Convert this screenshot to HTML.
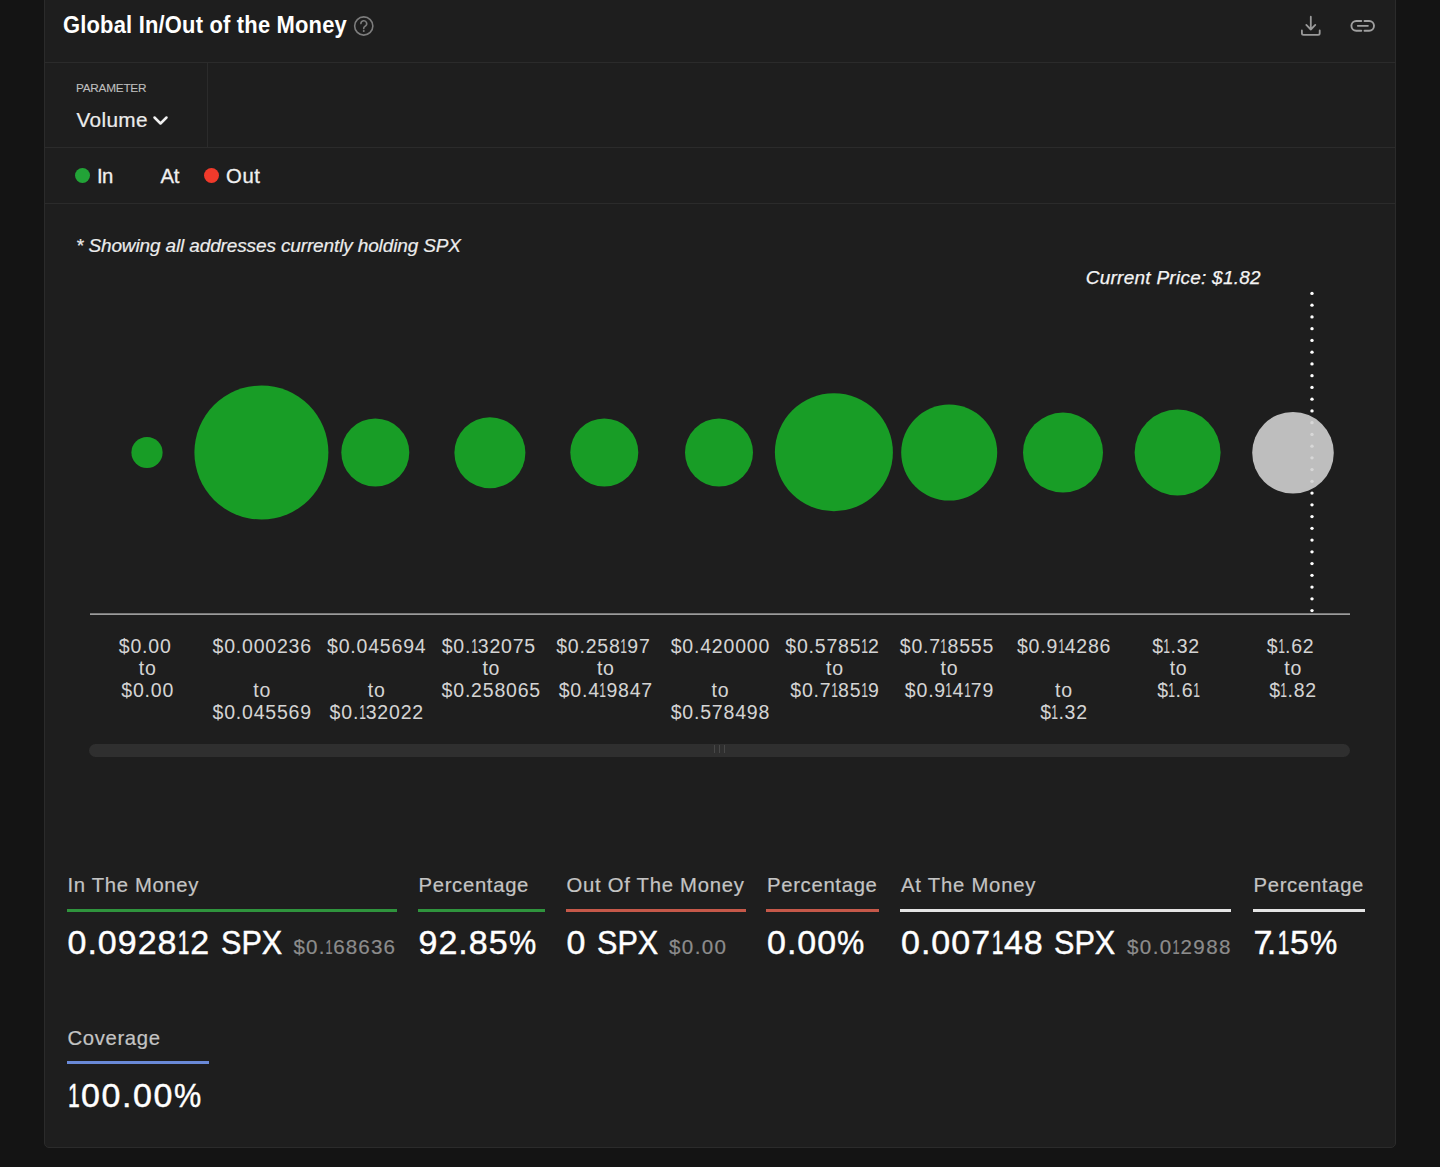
<!DOCTYPE html>
<html><head><meta charset="utf-8"><title>Global In/Out of the Money</title>
<style>
html,body{margin:0;padding:0;}
body{width:1440px;height:1167px;background:#141414;position:relative;overflow:hidden;font-family:"Liberation Sans",sans-serif;}
.t{position:absolute;white-space:pre;}
.r{position:absolute;}
.o{display:inline-block;transform:scaleX(.62);}
.sx{display:inline-block;transform:scaleX(.9);transform-origin:0 0;letter-spacing:0;}
</style></head><body>
<div class="r" style="left:44px;top:-10px;width:1352px;height:1158px;background:#1e1e1e;border:1px solid #2b2b2b;box-sizing:border-box;border-radius:5px;"></div>
<div class="t" style="left:62.50px;top:14.32px;font-size:23.6px;line-height:23.6px;color:#ffffff;font-weight:bold;letter-spacing:0.200px;transform:scaleX(0.93);transform-origin:0 0;">Global In/Out of the Money</div>
<svg class="r" style="left:352px;top:14px" width="24" height="24" viewBox="0 0 24 24"><circle cx="11.75" cy="12" r="9.1" fill="none" stroke="#7d7d7d" stroke-width="1.6"/><path d="M8.9 9.6a2.9 2.9 0 1 1 4.2 2.6c-0.8 0.45-1.35 0.95-1.35 1.9v0.5" fill="none" stroke="#7d7d7d" stroke-width="1.6" stroke-linecap="round"/><circle cx="11.75" cy="16.9" r="1" fill="#7d7d7d"/></svg>
<svg class="r" style="left:1298px;top:12px" width="26" height="26" viewBox="0 0 26 26"><path d="M12.8 4.7v12.8M8.3 12.9l4.5 4.6 4.5-4.6" fill="none" stroke="#9a9a9a" stroke-width="1.8" stroke-linecap="round" stroke-linejoin="round"/><path d="M3.9 18.5v2.8a1.6 1.6 0 0 0 1.6 1.6h14.6a1.6 1.6 0 0 0 1.6-1.6v-2.8" fill="none" stroke="#9a9a9a" stroke-width="1.8" stroke-linecap="round"/></svg>
<svg class="r" style="left:1348px;top:14px" width="30" height="24" viewBox="0 0 30 24"><path d="M13.3 7H8.25a4.85 4.85 0 0 0 0 9.7H13.3M16.5 7h4.65a4.85 4.85 0 0 1 0 9.7H16.5M9.8 11.85h10.1" fill="none" stroke="#a0a0a0" stroke-width="1.9" stroke-linecap="round"/></svg>
<div class="r" style="left:45px;top:62px;width:1350px;height:1px;background:#2b2b2b;"></div>
<div class="r" style="left:207px;top:62px;width:1px;height:85px;background:#2b2b2b;"></div>
<div class="r" style="left:45px;top:147px;width:1350px;height:1px;background:#2b2b2b;"></div>
<div class="r" style="left:45px;top:203px;width:1350px;height:1px;background:#2b2b2b;"></div>
<div class="t" style="left:76.00px;top:83.01px;font-size:11.8px;line-height:11.8px;color:#bfbfbf;letter-spacing:-0.258px;-webkit-text-stroke:0.1px currentColor;">PARAMETER</div>
<div class="t" style="left:76.50px;top:110.29px;font-size:20.8px;line-height:20.8px;color:#ececec;letter-spacing:0.324px;-webkit-text-stroke:0.2px currentColor;">Volume</div>
<svg class="r" style="left:150px;top:110px" width="20" height="20" viewBox="0 0 20 20"><path d="M4.5 7.5l6 6 6-6" fill="none" stroke="#f0f0f0" stroke-width="2.5" stroke-linecap="round" stroke-linejoin="round"/></svg>
<div class="r" style="left:74.7px;top:167.9px;width:15px;height:15px;border-radius:50%;background:#22a337"></div>
<div class="t" style="left:97.00px;top:165.82px;font-size:20.3px;line-height:20.3px;color:#f0f0f0;letter-spacing:-0.600px;-webkit-text-stroke:0.3px currentColor;">In</div>
<div class="t" style="left:160.50px;top:165.82px;font-size:20.3px;line-height:20.3px;color:#f0f0f0;letter-spacing:-0.180px;-webkit-text-stroke:0.3px currentColor;">At</div>
<div class="r" style="left:203.8px;top:167.9px;width:15px;height:15px;border-radius:50%;background:#f03a2b"></div>
<div class="t" style="left:226.00px;top:165.82px;font-size:20.3px;line-height:20.3px;color:#f0f0f0;letter-spacing:0.640px;-webkit-text-stroke:0.3px currentColor;">Out</div>
<div class="t" style="left:76.00px;top:236.12px;font-size:19px;line-height:19px;color:#ececec;font-style:italic;letter-spacing:-0.131px;-webkit-text-stroke:0.2px currentColor;">* Showing all addresses currently holding SPX</div>
<div class="t" style="left:1085.70px;top:267.92px;font-size:19px;line-height:19px;color:#f4f4f4;font-style:italic;letter-spacing:0.262px;-webkit-text-stroke:0.25px currentColor;">Current Price: $1.82</div>
<svg class="r" style="left:0;top:0" width="1440" height="1167" viewBox="0 0 1440 1167">
<circle cx="1312" cy="293.40" r="1.7" fill="#ffffff"/>
<circle cx="1312" cy="305.15" r="1.7" fill="#ffffff"/>
<circle cx="1312" cy="316.90" r="1.7" fill="#ffffff"/>
<circle cx="1312" cy="328.64" r="1.7" fill="#ffffff"/>
<circle cx="1312" cy="340.39" r="1.7" fill="#ffffff"/>
<circle cx="1312" cy="352.14" r="1.7" fill="#ffffff"/>
<circle cx="1312" cy="363.89" r="1.7" fill="#ffffff"/>
<circle cx="1312" cy="375.64" r="1.7" fill="#ffffff"/>
<circle cx="1312" cy="387.39" r="1.7" fill="#ffffff"/>
<circle cx="1312" cy="399.13" r="1.7" fill="#ffffff"/>
<circle cx="1312" cy="410.88" r="1.7" fill="#ffffff"/>
<circle cx="1312" cy="422.63" r="1.7" fill="#ffffff"/>
<circle cx="1312" cy="434.38" r="1.7" fill="#ffffff"/>
<circle cx="1312" cy="446.13" r="1.7" fill="#ffffff"/>
<circle cx="1312" cy="457.87" r="1.7" fill="#ffffff"/>
<circle cx="1312" cy="469.62" r="1.7" fill="#ffffff"/>
<circle cx="1312" cy="481.37" r="1.7" fill="#ffffff"/>
<circle cx="1312" cy="493.12" r="1.7" fill="#ffffff"/>
<circle cx="1312" cy="504.87" r="1.7" fill="#ffffff"/>
<circle cx="1312" cy="516.61" r="1.7" fill="#ffffff"/>
<circle cx="1312" cy="528.36" r="1.7" fill="#ffffff"/>
<circle cx="1312" cy="540.11" r="1.7" fill="#ffffff"/>
<circle cx="1312" cy="551.86" r="1.7" fill="#ffffff"/>
<circle cx="1312" cy="563.61" r="1.7" fill="#ffffff"/>
<circle cx="1312" cy="575.36" r="1.7" fill="#ffffff"/>
<circle cx="1312" cy="587.10" r="1.7" fill="#ffffff"/>
<circle cx="1312" cy="598.85" r="1.7" fill="#ffffff"/>
<circle cx="1312" cy="610.60" r="1.7" fill="#ffffff"/>
<circle cx="147" cy="452.5" r="15.6" fill="#189d26"/>
<circle cx="261.4" cy="452.5" r="67" fill="#189d26"/>
<circle cx="375.3" cy="452.5" r="34" fill="#189d26"/>
<circle cx="489.9" cy="452.8" r="35.5" fill="#189d26"/>
<circle cx="604.3" cy="452.5" r="34" fill="#189d26"/>
<circle cx="719" cy="452.5" r="34" fill="#189d26"/>
<circle cx="833.9" cy="452.3" r="59" fill="#189d26"/>
<circle cx="949.2" cy="452.6" r="48" fill="#189d26"/>
<circle cx="1063" cy="452.6" r="40" fill="#189d26"/>
<circle cx="1177.6" cy="452.6" r="43" fill="#189d26"/>
<circle cx="1293" cy="452.8" r="40.8" fill="#d2d2d2" fill-opacity="0.89"/>
<rect x="90" y="613.5" width="1260" height="1.2" fill="#d2d2d2"/>
</svg>
<div class="t" style="left:118.77px;top:636.79px;font-size:19.5px;line-height:19.5px;color:#d4d4d4;letter-spacing:0.800px;-webkit-text-stroke:0.05px currentColor;">$0.00</div>
<div class="t" style="left:138.74px;top:658.74px;font-size:19.5px;line-height:19.5px;color:#d4d4d4;letter-spacing:0.800px;-webkit-text-stroke:0.05px currentColor;">to</div>
<div class="t" style="left:121.27px;top:680.69px;font-size:19.5px;line-height:19.5px;color:#d4d4d4;letter-spacing:0.800px;-webkit-text-stroke:0.05px currentColor;">$0.00</div>
<div class="t" style="left:212.53px;top:636.79px;font-size:19.5px;line-height:19.5px;color:#d4d4d4;letter-spacing:0.800px;-webkit-text-stroke:0.05px currentColor;">$0.000236</div>
<div class="t" style="left:253.29px;top:680.69px;font-size:19.5px;line-height:19.5px;color:#d4d4d4;letter-spacing:0.800px;-webkit-text-stroke:0.05px currentColor;">to</div>
<div class="t" style="left:212.53px;top:702.64px;font-size:19.5px;line-height:19.5px;color:#d4d4d4;letter-spacing:0.800px;-webkit-text-stroke:0.05px currentColor;">$0.045569</div>
<div class="t" style="left:327.07px;top:636.79px;font-size:19.5px;line-height:19.5px;color:#d4d4d4;letter-spacing:0.800px;-webkit-text-stroke:0.05px currentColor;">$0.045694</div>
<div class="t" style="left:367.83px;top:680.69px;font-size:19.5px;line-height:19.5px;color:#d4d4d4;letter-spacing:0.800px;-webkit-text-stroke:0.05px currentColor;">to</div>
<div class="t" style="left:329.61px;top:702.64px;font-size:19.5px;line-height:19.5px;color:#d4d4d4;letter-spacing:0.800px;-webkit-text-stroke:0.05px currentColor;">$0.<span class="o" style="margin:0 -0.13em">1</span>32022</div>
<div class="t" style="left:441.65px;top:636.79px;font-size:19.5px;line-height:19.5px;color:#d4d4d4;letter-spacing:0.800px;-webkit-text-stroke:0.05px currentColor;">$0.<span class="o" style="margin:0 -0.13em">1</span>32075</div>
<div class="t" style="left:482.38px;top:658.74px;font-size:19.5px;line-height:19.5px;color:#d4d4d4;letter-spacing:0.800px;-webkit-text-stroke:0.05px currentColor;">to</div>
<div class="t" style="left:441.62px;top:680.69px;font-size:19.5px;line-height:19.5px;color:#d4d4d4;letter-spacing:0.800px;-webkit-text-stroke:0.05px currentColor;">$0.258065</div>
<div class="t" style="left:556.20px;top:636.79px;font-size:19.5px;line-height:19.5px;color:#d4d4d4;letter-spacing:0.800px;-webkit-text-stroke:0.05px currentColor;">$0.258<span class="o" style="margin:0 -0.13em">1</span>97</div>
<div class="t" style="left:596.92px;top:658.74px;font-size:19.5px;line-height:19.5px;color:#d4d4d4;letter-spacing:0.800px;-webkit-text-stroke:0.05px currentColor;">to</div>
<div class="t" style="left:558.70px;top:680.69px;font-size:19.5px;line-height:19.5px;color:#d4d4d4;letter-spacing:0.800px;-webkit-text-stroke:0.05px currentColor;">$0.4<span class="o" style="margin:0 -0.13em">1</span>9847</div>
<div class="t" style="left:670.71px;top:636.79px;font-size:19.5px;line-height:19.5px;color:#d4d4d4;letter-spacing:0.800px;-webkit-text-stroke:0.05px currentColor;">$0.420000</div>
<div class="t" style="left:711.47px;top:680.69px;font-size:19.5px;line-height:19.5px;color:#d4d4d4;letter-spacing:0.800px;-webkit-text-stroke:0.05px currentColor;">to</div>
<div class="t" style="left:670.71px;top:702.64px;font-size:19.5px;line-height:19.5px;color:#d4d4d4;letter-spacing:0.800px;-webkit-text-stroke:0.05px currentColor;">$0.578498</div>
<div class="t" style="left:785.29px;top:636.79px;font-size:19.5px;line-height:19.5px;color:#d4d4d4;letter-spacing:0.800px;-webkit-text-stroke:0.05px currentColor;">$0.5785<span class="o" style="margin:0 -0.13em">1</span>2</div>
<div class="t" style="left:826.01px;top:658.74px;font-size:19.5px;line-height:19.5px;color:#d4d4d4;letter-spacing:0.800px;-webkit-text-stroke:0.05px currentColor;">to</div>
<div class="t" style="left:790.32px;top:680.69px;font-size:19.5px;line-height:19.5px;color:#d4d4d4;letter-spacing:0.800px;-webkit-text-stroke:0.05px currentColor;">$0.7<span class="o" style="margin:0 -0.13em">1</span>85<span class="o" style="margin:0 -0.13em">1</span>9</div>
<div class="t" style="left:899.83px;top:636.79px;font-size:19.5px;line-height:19.5px;color:#d4d4d4;letter-spacing:0.800px;-webkit-text-stroke:0.05px currentColor;">$0.7<span class="o" style="margin:0 -0.13em">1</span>8555</div>
<div class="t" style="left:940.56px;top:658.74px;font-size:19.5px;line-height:19.5px;color:#d4d4d4;letter-spacing:0.800px;-webkit-text-stroke:0.05px currentColor;">to</div>
<div class="t" style="left:904.87px;top:680.69px;font-size:19.5px;line-height:19.5px;color:#d4d4d4;letter-spacing:0.800px;-webkit-text-stroke:0.05px currentColor;">$0.9<span class="o" style="margin:0 -0.13em">1</span>4<span class="o" style="margin:0 -0.13em">1</span>79</div>
<div class="t" style="left:1016.88px;top:636.79px;font-size:19.5px;line-height:19.5px;color:#d4d4d4;letter-spacing:0.800px;-webkit-text-stroke:0.05px currentColor;">$0.9<span class="o" style="margin:0 -0.13em">1</span>4286</div>
<div class="t" style="left:1055.10px;top:680.69px;font-size:19.5px;line-height:19.5px;color:#d4d4d4;letter-spacing:0.800px;-webkit-text-stroke:0.05px currentColor;">to</div>
<div class="t" style="left:1040.17px;top:702.64px;font-size:19.5px;line-height:19.5px;color:#d4d4d4;letter-spacing:0.800px;-webkit-text-stroke:0.05px currentColor;">$<span class="o" style="margin:0 -0.13em">1</span>.32</div>
<div class="t" style="left:1152.21px;top:636.79px;font-size:19.5px;line-height:19.5px;color:#d4d4d4;letter-spacing:0.800px;-webkit-text-stroke:0.05px currentColor;">$<span class="o" style="margin:0 -0.13em">1</span>.32</div>
<div class="t" style="left:1169.65px;top:658.74px;font-size:19.5px;line-height:19.5px;color:#d4d4d4;letter-spacing:0.800px;-webkit-text-stroke:0.05px currentColor;">to</div>
<div class="t" style="left:1157.25px;top:680.69px;font-size:19.5px;line-height:19.5px;color:#d4d4d4;letter-spacing:0.800px;-webkit-text-stroke:0.05px currentColor;">$<span class="o" style="margin:0 -0.13em">1</span>.6<span class="o" style="margin:0 -0.13em">1</span></div>
<div class="t" style="left:1266.76px;top:636.79px;font-size:19.5px;line-height:19.5px;color:#d4d4d4;letter-spacing:0.800px;-webkit-text-stroke:0.05px currentColor;">$<span class="o" style="margin:0 -0.13em">1</span>.62</div>
<div class="t" style="left:1284.19px;top:658.74px;font-size:19.5px;line-height:19.5px;color:#d4d4d4;letter-spacing:0.800px;-webkit-text-stroke:0.05px currentColor;">to</div>
<div class="t" style="left:1269.26px;top:680.69px;font-size:19.5px;line-height:19.5px;color:#d4d4d4;letter-spacing:0.800px;-webkit-text-stroke:0.05px currentColor;">$<span class="o" style="margin:0 -0.13em">1</span>.82</div>
<div class="r" style="left:89px;top:744px;width:1261px;height:13px;background:#2f2f2f;border-radius:6.5px;"></div>
<div class="r" style="left:714px;top:745px;width:1px;height:8px;background:#474747;"></div>
<div class="r" style="left:719px;top:745px;width:1px;height:8px;background:#474747;"></div>
<div class="r" style="left:724px;top:745px;width:1px;height:8px;background:#474747;"></div>
<div class="t" style="left:67.50px;top:875.12px;font-size:20.3px;line-height:20.3px;color:#c4c4c4;letter-spacing:0.659px;-webkit-text-stroke:0.2px currentColor;">In The Money</div>
<div class="r" style="left:66.5px;top:909px;width:330px;height:3px;background:#2f943d;"></div>
<div class="t" style="left:67.50px;top:924.82px;font-size:34px;line-height:34px;color:#ffffff;letter-spacing:1.000px;-webkit-text-stroke:0.45px currentColor;">0.0928<span class="o" style="margin:0 -0.105em">1</span>2 <span class="sx">SPX</span></div>
<div class="t" style="left:293.50px;top:937.36px;font-size:20.6px;line-height:20.6px;color:#8c8c8c;letter-spacing:1.133px;-webkit-text-stroke:0.2px currentColor;">$0.<span class="o" style="margin:0 -0.12em">1</span>68636</div>
<div class="t" style="left:418.50px;top:875.12px;font-size:20.3px;line-height:20.3px;color:#c4c4c4;letter-spacing:0.685px;-webkit-text-stroke:0.2px currentColor;">Percentage</div>
<div class="r" style="left:417.5px;top:909px;width:127px;height:3px;background:#2f943d;"></div>
<div class="t" style="left:418.50px;top:924.82px;font-size:34px;line-height:34px;color:#ffffff;letter-spacing:1.000px;-webkit-text-stroke:0.45px currentColor;">92.85<span class="sx">%</span></div>
<div class="t" style="left:566.50px;top:875.12px;font-size:20.3px;line-height:20.3px;color:#c4c4c4;letter-spacing:0.726px;-webkit-text-stroke:0.2px currentColor;">Out Of The Money</div>
<div class="r" style="left:565.5px;top:909px;width:180px;height:3px;background:#c65849;"></div>
<div class="t" style="left:566.50px;top:924.82px;font-size:34px;line-height:34px;color:#ffffff;letter-spacing:1.000px;-webkit-text-stroke:0.45px currentColor;">0 <span class="sx">SPX</span></div>
<div class="t" style="left:669.00px;top:937.36px;font-size:20.6px;line-height:20.6px;color:#8c8c8c;letter-spacing:1.362px;-webkit-text-stroke:0.2px currentColor;">$0.00</div>
<div class="t" style="left:767.00px;top:875.12px;font-size:20.3px;line-height:20.3px;color:#c4c4c4;letter-spacing:0.685px;-webkit-text-stroke:0.2px currentColor;">Percentage</div>
<div class="r" style="left:766px;top:909px;width:113px;height:3px;background:#c65849;"></div>
<div class="t" style="left:767.00px;top:924.82px;font-size:34px;line-height:34px;color:#ffffff;letter-spacing:1.000px;-webkit-text-stroke:0.45px currentColor;">0.00<span class="sx">%</span></div>
<div class="t" style="left:901.00px;top:875.12px;font-size:20.3px;line-height:20.3px;color:#c4c4c4;letter-spacing:0.772px;-webkit-text-stroke:0.2px currentColor;">At The Money</div>
<div class="r" style="left:900px;top:909px;width:331px;height:3px;background:#e4e4e4;"></div>
<div class="t" style="left:901.00px;top:924.82px;font-size:34px;line-height:34px;color:#ffffff;letter-spacing:1.000px;-webkit-text-stroke:0.45px currentColor;">0.007<span class="o" style="margin:0 -0.105em">1</span>48 <span class="sx">SPX</span></div>
<div class="t" style="left:1127.00px;top:937.36px;font-size:20.6px;line-height:20.6px;color:#8c8c8c;letter-spacing:1.383px;-webkit-text-stroke:0.2px currentColor;">$0.0<span class="o" style="margin:0 -0.12em">1</span>2988</div>
<div class="t" style="left:1253.50px;top:875.12px;font-size:20.3px;line-height:20.3px;color:#c4c4c4;letter-spacing:0.685px;-webkit-text-stroke:0.2px currentColor;">Percentage</div>
<div class="r" style="left:1252.5px;top:909px;width:112px;height:3px;background:#e4e4e4;"></div>
<div class="t" style="left:1253.50px;top:924.82px;font-size:34px;line-height:34px;color:#ffffff;letter-spacing:1.000px;-webkit-text-stroke:0.45px currentColor;">7<span style="margin-left:-0.2em">.</span><span class="o" style="margin:0 -0.105em">1</span>5<span class="sx">%</span></div>
<div class="t" style="left:67.50px;top:1027.82px;font-size:20.3px;line-height:20.3px;color:#c4c4c4;letter-spacing:0.640px;-webkit-text-stroke:0.2px currentColor;">Coverage</div>
<div class="r" style="left:66.5px;top:1061px;width:142px;height:3px;background:#6a8ad8;"></div>
<div class="t" style="left:67.50px;top:1077.72px;font-size:34px;line-height:34px;color:#ffffff;letter-spacing:1.600px;-webkit-text-stroke:0.45px currentColor;"><span class="o" style="margin:0 -0.105em">1</span>00.00<span class="sx">%</span></div>
</body></html>
